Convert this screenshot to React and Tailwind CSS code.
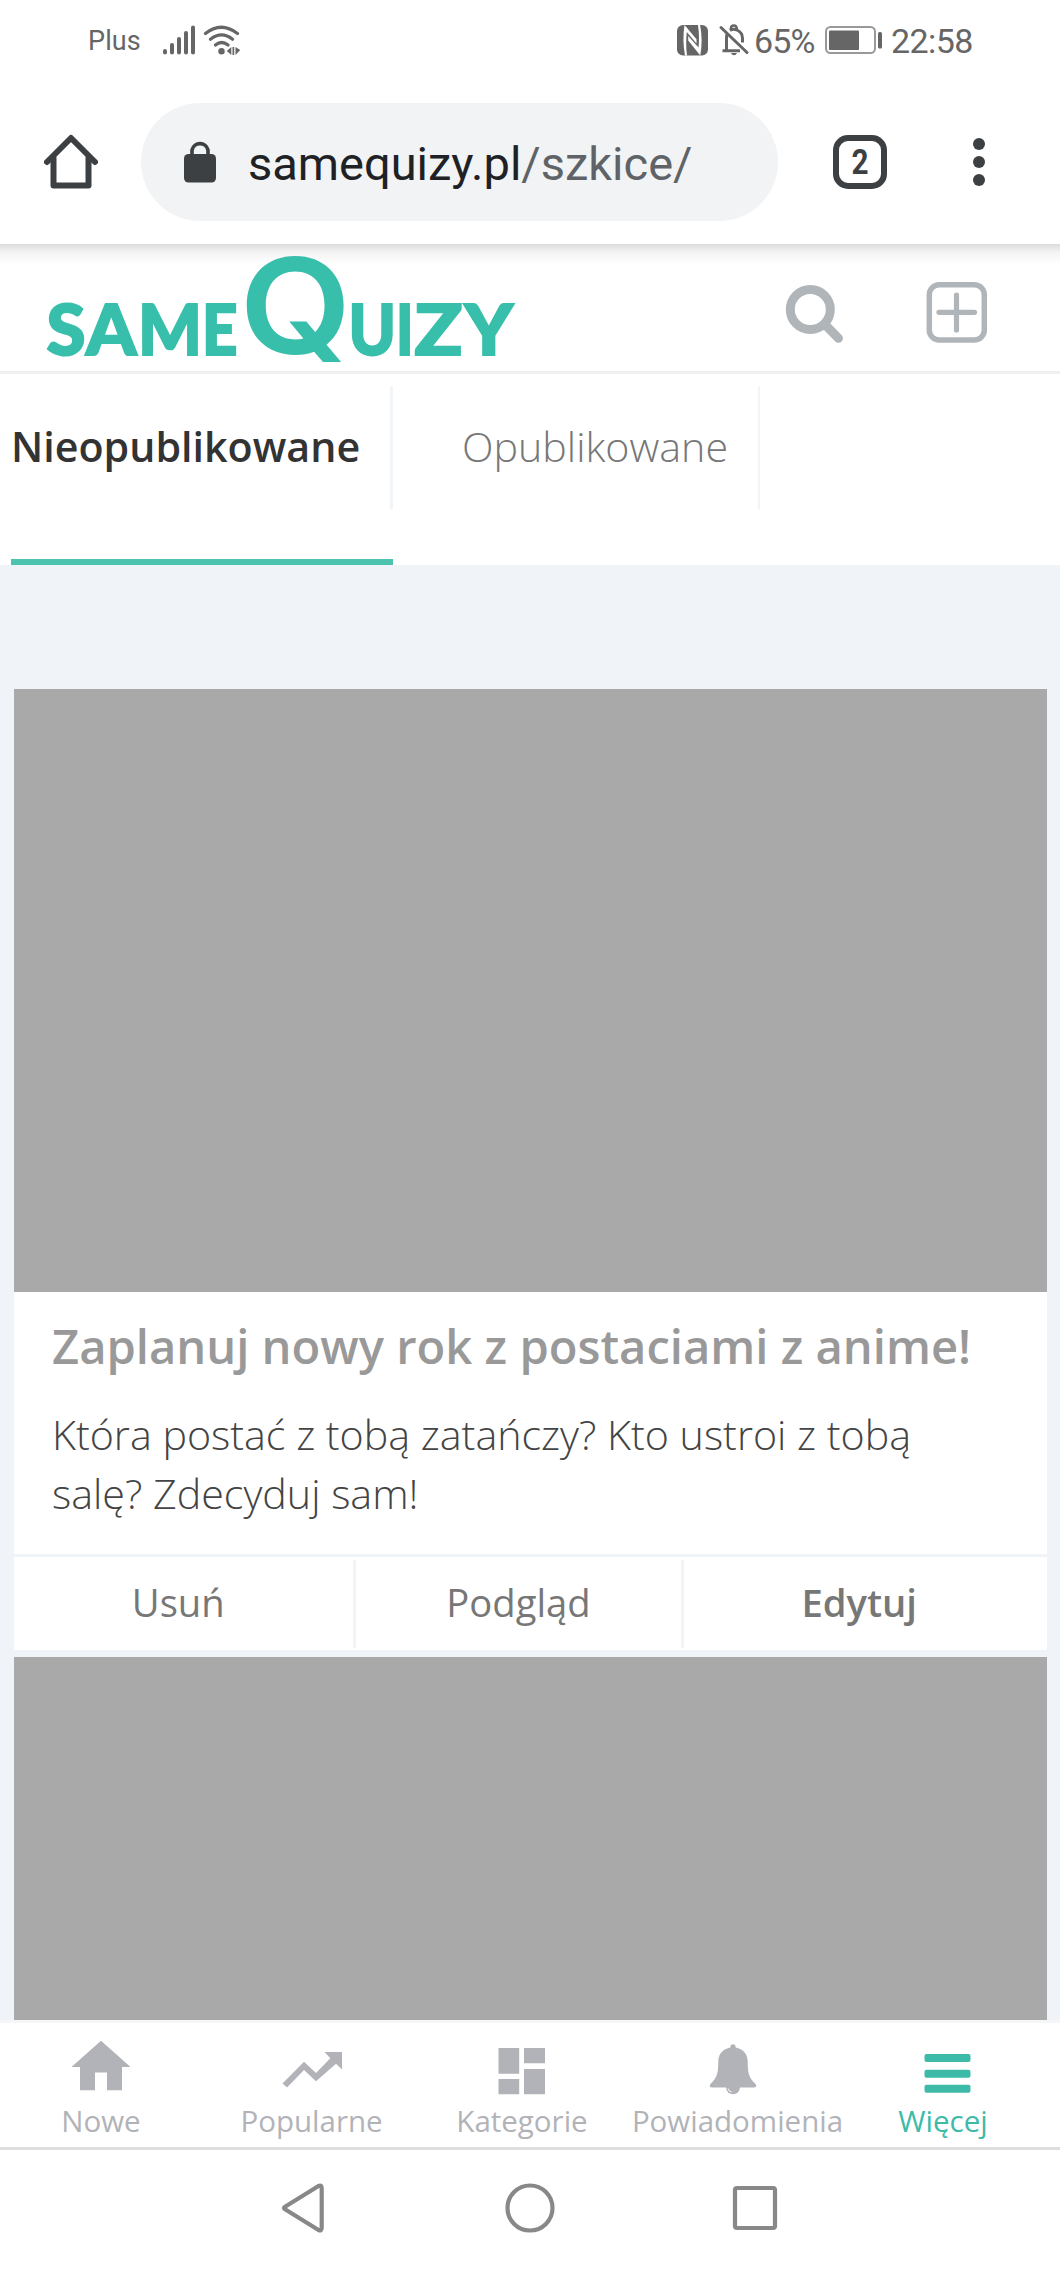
import { useState } from "react";

const TABS = [
  { id: "drafts", label: "Nieopublikowane" },
  { id: "published", label: "Opublikowane" },
];

// Wordmark letters: [char, x, width]
const LOGO_LETTERS = [
  ["S", 46.5, 39],
  ["A", 86, 50.5],
  ["M", 138, 64],
  ["E", 202, 35.5],
  ["U", 348.5, 47.5],
  ["I", 396, 17.5],
  ["Z", 414.5, 48],
  ["Y", 464.5, 48.5],
];

function StatusBar() {
  return (
    <div className="flex h-[81px] items-center pl-[88px] font-[Roboto,sans-serif] text-[#666]">
      <span className="mt-px w-[74px] text-[27px] leading-none tracking-[0.1px]">Plus</span>
      {/* Signal */}
      <svg className="mt-[-2px] h-8 w-[34px]" viewBox="0 0 34 32" stroke="currentColor" strokeWidth="4" strokeLinecap="round">
        <path d="M3 27v1.500M10 21v7.500M17 15v13.500M24 9v19.500M31 3.500v25" />
      </svg>
      {/* Wifi */}
      <svg className="mt-[-2px] ml-[7px] h-8 w-[38px]" viewBox="0 0 38 32" fill="none" stroke="currentColor" strokeWidth="3.200" strokeLinecap="round">
        <path d="M2.500 9.500q15.500-12.500 32 0M7.500 15.200q11-8.500 22 0M12.500 21q6-5 12.500 0" />
        <circle cx="18.500" cy="27.300" r="3.200" fill="currentColor" stroke="none" />
        <path d="M28.300 23v8l-4.500-4zM29.500 23h1.700v8h-1.700zM32.500 23l4.700 3-4.700 5z" fill="currentColor" stroke="none" />
      </svg>
      {/* NFC */}
      <svg className="mt-[-2px] ml-[435px] h-8 w-[33px]" viewBox="0 0 33 32">
        <rect x="1" y="1" width="31" height="30.500" rx="6" fill="currentColor" />
        <path d="M8.500 1C7 11 7 21 9 31.500h2C10 24 10 15 10.800 8l9.700 11.500v-4.200zM24.300 31.500c1.800-10 1.800-20-.2-30.500H22c1.200 8 1.300 16 .5 22.500L12.200 12v4.500z" fill="white" />
      </svg>
      {/* Muted bell */}
      <svg className="mt-[-2px] ml-[9px] h-8 w-[32px]" viewBox="0 0 32 32" fill="none" stroke="currentColor" strokeWidth="3">
        <path d="M3 3.500 29 28.500" strokeLinecap="round" />
        <path d="M4.500 26.700H22M8.500 26V13.500q0-2 .7-4M12 6.500q3-2 7-.5 5.500 2.500 5.500 8.500v4" />
        <path d="M12.800 5q0-3.500 3-3.500t3 3.500" strokeWidth="2.500" />
        <path d="M13 29h6q-1 2.200-3 2.200T13 29z" fill="currentColor" stroke="none" />
      </svg>
      <span className="ml-[4px] w-[71px] text-[34px] leading-none tracking-[-0.9px]">65%</span>
      {/* Battery */}
      <svg className="mt-[-2px] h-[28px] w-[58px]" viewBox="0 0 58 28">
        <rect x="1" y="1" width="49" height="26" rx="4.500" fill="none" stroke="#999" strokeWidth="2" />
        <rect x="4" y="4.500" width="30" height="19.500" rx="1" fill="#666" />
        <rect x="53" y="6" width="4" height="16.500" rx="1.500" fill="#666" />
      </svg>
      <span className="ml-[8px] text-[34px] leading-none tracking-[-0.6px]">22:58</span>
    </div>
  );
}

function BrowserBar() {
  return (
    <div className="flex h-[163px] items-center pb-[1px] pl-[44px] font-[Roboto,sans-serif]">
      <svg className="h-[56px] w-[54px]" viewBox="0 0 54 56" fill="none" stroke="#3c4043" strokeWidth="6" strokeLinecap="round" strokeLinejoin="round">
        <path d="M3 28 27 4l24 24" />
        <path d="M9.500 24v27.500h35V24" />
      </svg>
      <div className="ml-[43px] flex h-[118px] w-[637px] items-center rounded-full bg-[#f1f3f4] pl-[43px]">
        <svg className="mt-[-2px] h-[43px] w-[32px]" viewBox="0 0 32 43">
          <rect y="14" width="32" height="28.500" rx="4.500" fill="#3c4043" />
          <path d="M8 16v-6a8.200 8.200 0 0 1 16 0v6" fill="none" stroke="#3c4043" strokeWidth="3.600" />
        </svg>
        <span className="mt-[3px] ml-[32px] text-[47px] leading-none text-[#5f6368]">
          <span className="text-[#202124]">samequizy.pl</span>/szkice/
        </span>
      </div>
      <div className="ml-[55px] flex size-[54px] items-center justify-center rounded-[15px] border-[6px] border-[#3c4043] text-[35px] leading-none font-bold text-[#3c4043]">
        <span className="scale-x-85">2</span>
      </div>
      <div className="ml-[86px] flex flex-col gap-[6px]">
        <span className="size-[12px] rounded-full bg-[#3c4043]" />
        <span className="size-[12px] rounded-full bg-[#3c4043]" />
        <span className="size-[12px] rounded-full bg-[#3c4043]" />
      </div>
    </div>
  );
}

function Logo() {
  return (
    <svg className="h-[112px] w-[480px] overflow-visible" viewBox="40 250 480 112" fill="#38bfab">
      <g fontFamily="Lato, sans-serif" fontWeight="900" fontSize="69.500" stroke="#38bfab" strokeWidth="2">
        {LOGO_LETTERS.map(([char, x, width]) => (
          <text key={char} x={x} y="354.700" textLength={width} lengthAdjust="spacingAndGlyphs">
            {char}
          </text>
        ))}
      </g>
      <text x="239.500" y="353.500" textLength="112" lengthAdjust="spacingAndGlyphs" fontFamily="Inter, sans-serif" fontWeight="600" fontSize="133">
        Q
      </text>
    </svg>
  );
}

function SiteHeader() {
  return (
    <header className="h-[130px] border-b-[3px] border-[#f0f0f0] bg-linear-to-b from-[#dcdcdc] via-[#f2f2f2] via-6% to-white to-16%">
      <div className="flex pt-[6px] pl-[40px]">
        <Logo />
        <svg className="mt-[34px] ml-[264px] size-[60px]" viewBox="784 284 60 60" fill="none" stroke="#b0b5b9">
          <circle cx="810.300" cy="309.500" r="20" strokeWidth="9" />
          <path d="m825.500 325 13 13.300" strokeWidth="9" strokeLinecap="round" />
        </svg>
        <svg className="mt-[31px] ml-[81px] size-[64px]" viewBox="925 281 64 64" fill="none" stroke="#b0b5b9">
          <rect x="929.300" y="284.700" width="55" height="55.300" rx="10" strokeWidth="5.500" />
          <path d="M939 312.300h35.500M956.500 295v35" strokeWidth="5.200" strokeLinecap="round" />
        </svg>
      </div>
    </header>
  );
}

function Tabs({ active, onChange }) {
  return (
    <nav className="flex h-[191px] pl-[11px] leading-none">
      {TABS.map((tab) => {
        const isActive = tab.id === active;
        return (
          <button
            key={tab.id}
            onClick={() => onChange(tab.id)}
            className={
              isActive
                ? "flex w-[382px] flex-col border-b-[6px] border-[#4bc3af] pt-[12px] text-[41.200px] font-semibold text-[#333]"
                : "flex w-[367px] flex-col border-b-[6px] border-transparent pt-[12px] text-[41.200px] font-light text-[#777]"
            }
          >
            <span
              className={
                isActive
                  ? "flex h-[123px] w-full items-center border-r-[3px] border-[#f1f5f7] pb-[1px]"
                  : "flex h-[123px] w-full items-center border-r-[2px] border-[#f1f5f7] pb-[1px] pl-[69px]"
              }
            >
              {tab.label}
            </span>
          </button>
        );
      })}
    </nav>
  );
}

function QuizCard({ title, description }) {
  return (
    <article className="mx-[13.500px] bg-white">
      <div className="h-[602.500px] bg-[#a9a9a9]" />
      <div className="h-[262.500px] px-[38.500px] pt-[25.500px]">
        <h2 className="text-[47.150px] leading-[58px] font-semibold whitespace-nowrap text-[#999]">{title}</h2>
        <p className="mt-[30px] w-[900px] text-[41.200px] leading-[58.700px] font-light text-[#444]">{description}</p>
      </div>
      <div className="flex h-[96px] border-t-[3px] border-[#f1f4f7] pt-[3px] pb-[2px] text-[38.200px] leading-none text-[#777]">
        <button className="w-[342.500px] border-r-[3px] border-[#f1f4f7] pr-[10px] pb-[4px]">Usuń</button>
        <button className="w-[328px] border-r-[3px] border-[#f1f4f7] pb-[4px]">Podgląd</button>
        <button className="flex-1 pr-[12px] pb-[4px] font-semibold">Edytuj</button>
      </div>
    </article>
  );
}

function NavItem({ label, className, children }) {
  return (
    <a className={`flex flex-col items-center ${className}`}>
      <svg className="h-[60px] w-[64px]" viewBox="0 0 64 60" fill="currentColor">
        {children}
      </svg>
      <span className="mt-[9px] text-[29.500px] leading-[32px] whitespace-nowrap">{label}</span>
    </a>
  );
}

function BottomNav() {
  return (
    <nav className="flex h-[130px] border-t-[3px] border-b-[3px] border-t-[#f5f6f7] border-b-[#dedede] bg-white pt-[13px] text-[#b2b3b8]">
      <NavItem label="Nowe" className="w-[202px]">
        <path d="M32 4.700 61.500 31H53V54.300H38V36.500H26V54.300H11V31H2.500z" />
      </NavItem>
      <NavItem label="Popularne" className="w-[219px]">
        <path d="M44.500 16H62V33.500l-6-5.800L36 45.300 24 34 7 51.500 2.500 47.500 24 25.700 36 37 50.300 22.300z" />
      </NavItem>
      <NavItem label="Kategorie" className="w-[202px]">
        <path d="M8.500 12h20.700v25.700H8.500zM34 12h21v15.300H34zM8.500 43h20.700v15.300H8.500zM34 33h21v25.300H34z" />
      </NavItem>
      <NavItem label="Powiadomienia" className="w-[229px]">
        <path d="M27 8.300c1.700 0 2.700 1.200 2.700 3.200 7.300 1.200 12 6.500 12 14 0 10.500 1 16.500 7.600 22.300 1.800 1.800.8 3.700-1.300 3.700H6c-2.100 0-3.100-1.900-1.300-3.700 6.600-5.800 7.600-11.800 7.600-22.300 0-7.500 4.700-12.800 12-14 0-2 1-3.200 2.700-3.200z" />
        <path d="M20 51a7 7.300 0 0 0 14 0z" />
        <path d="M22 52.500q.8 3 3.500 3.500" fill="none" stroke="white" strokeWidth="1" />
      </NavItem>
      <NavItem label="Więcej" className="w-[182px] text-[#3dbba8]">
        <rect x="13.500" y="18" width="46" height="8" rx="2" />
        <rect x="13.500" y="33.700" width="46" height="8" rx="2" />
        <rect x="13.500" y="48.700" width="46" height="8" rx="2" />
      </NavItem>
    </nav>
  );
}

function SystemNav() {
  return (
    <div className="flex h-[119px] items-center bg-white pb-[3px] pl-[280px]">
      <svg className="h-[54px] w-[500px]" viewBox="280 2181 500 54" fill="none" stroke="#888" strokeWidth="4.200" strokeLinejoin="round">
        <path d="M285 2206.800 318.500 2186Q321.700 2184.500 321.700 2188V2228Q321.700 2231.500 318.500 2230L285 2209.200Q283 2208 285 2206.800z" />
        <circle cx="530" cy="2208" r="22.500" />
        <rect x="735" y="2188" width="40" height="40" rx="2" />
      </svg>
    </div>
  );
}

export default function App() {
  const [tab, setTab] = useState("drafts");

  return (
    <div className="flex h-[2269px] w-[1060px] flex-col overflow-hidden bg-white font-['Open_Sans',sans-serif]">
      <StatusBar />
      <BrowserBar />
      <SiteHeader />
      <Tabs active={tab} onChange={setTab} />
      <main className="min-h-0 flex-1 overflow-hidden bg-[#f0f4f8] pt-[124px]">
        <QuizCard
          title="Zaplanuj nowy rok z postaciami z anime!"
          description="Która postać z tobą zatańczy? Kto ustroi z tobą salę? Zdecyduj sam!"
        />
        <div className="mx-[13.500px] mt-[6.500px] h-[603px] bg-[#a9a9a9]" />
      </main>
      <BottomNav />
      <SystemNav />
    </div>
  );
}
